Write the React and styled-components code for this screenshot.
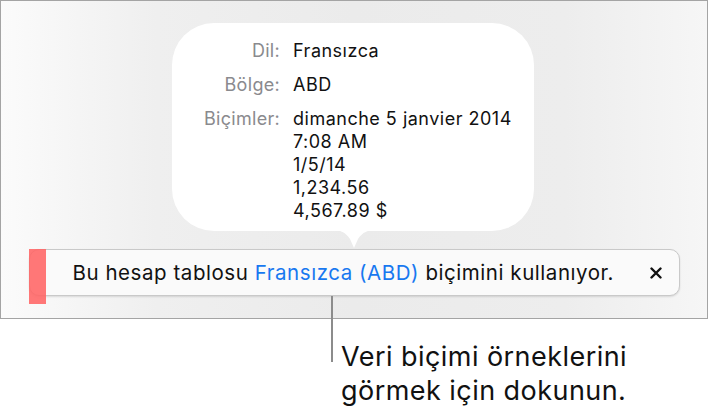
import React from 'react';
import styled, { createGlobalStyle } from 'styled-components';

const GlobalStyle = createGlobalStyle`
    html, body {
        margin: 0;
        padding: 0;
        background: #ffffff;
    }
    body {
        font-family: Inter, "Noto Sans", "Liberation Sans", sans-serif;
        color: #111111;
    }
`;

const Page = styled.div`
    width: 708px;
    height: 420px;
    position: relative;
    overflow: hidden;
`;

const Screen = styled.div`
    box-sizing: border-box;
    width: 708px;
    height: 319px;
    border: 1px solid #a4a4a4;
    background: linear-gradient(90deg, #fbfbfb 0%, #efefef 22%, #ebebeb 50%, #ededed 80%, #f6f6f6 100%);
    display: flex;
    flex-direction: column;
    align-items: center;
    padding-top: 22px;
`;

const Popover = styled.div`
    position: relative;
    box-sizing: border-box;
    width: 362px;
    height: 208px;
    margin-left: -2px;
    background: #ffffff;
    border-radius: 42px;
    padding: 16px 0 0 0;
    display: grid;
    grid-template-columns: 108px 1fr;
    column-gap: 13px;
    row-gap: 11px;
    align-content: start;

    &::after {
        content: '';
        position: absolute;
        left: 159px;
        bottom: -18px;
        width: 46px;
        height: 19px;
        background: #ffffff;
        clip-path: path('M0 0 C 10 0, 14 2, 19 9 L 23 18 L 27 9 C 32 2, 36 0, 46 0 Z');
    }
`;

const Label = styled.div`
    text-align: right;
    font-size: 18px;
    line-height: 23px;
    letter-spacing: 0.3px;
    color: #8a8a8e;
`;

const Value = styled.div`
    font-size: 18px;
    line-height: 23px;
    letter-spacing: 0.5px;
    color: #111111;
`;

const Banner = styled.div`
    position: relative;
    box-sizing: border-box;
    width: 651px;
    height: 47px;
    margin-top: 18px;
    background: #fafafa;
    border: 1px solid #c9c9c9;
    border-radius: 10px;
    box-shadow: 0 1px 2px rgba(0, 0, 0, 0.12);
    display: flex;
    align-items: center;
    padding: 0 15px 0 43px;
`;

const Marker = styled.div`
    position: absolute;
    left: -1px;
    top: -1px;
    width: 17px;
    height: 55px;
    background: rgba(255, 100, 100, 0.88);
`;

const Message = styled.div`
    flex: 1;
    font-size: 20.5px;
    letter-spacing: 0.55px;
    color: #111111;
    white-space: nowrap;
`;

const Link = styled.span`
    color: #1878f0;
`;

const Close = styled.div`
    width: 16px;
    height: 16px;
    display: flex;
    align-items: center;
    justify-content: center;
`;

const Leader = styled.div`
    position: absolute;
    left: 331px;
    top: 296px;
    width: 2px;
    height: 66px;
    background: #8c8c8c;
`;

const Callout = styled.div`
    margin: 21px 0 0 341px;
    font-size: 27px;
    line-height: 34px;
    letter-spacing: 0.45px;
    color: #111111;
`;

const rows = [
    ['Dil:', ['Fransızca']],
    ['Bölge:', ['ABD']],
    ['Biçimler:', ['dimanche 5 janvier 2014', '7:08 AM', '1/5/14', '1,234.56', '4,567.89 $']],
];

export default function App() {
    return (
        <Page>
            <GlobalStyle />
            <Screen>
                <Popover>
                    {rows.map(([label, values]) => (
                        <React.Fragment key={label}>
                            <Label>{label}</Label>
                            <Value>
                                {values.map((v) => (
                                    <div key={v}>{v}</div>
                                ))}
                            </Value>
                        </React.Fragment>
                    ))}
                </Popover>
                <Banner>
                    <Marker />
                    <Message>
                        Bu hesap tablosu <Link>Fransızca (ABD)</Link> biçimini kullanıyor.
                    </Message>
                    <Close>
                        <svg width="12" height="12" viewBox="0 0 12 12">
                            <path d="M1.5 1.5 L10.5 10.5 M10.5 1.5 L1.5 10.5" stroke="#111" strokeWidth="2.4" strokeLinecap="round" />
                        </svg>
                    </Close>
                </Banner>
            </Screen>
            <Leader />
            <Callout>
                Veri biçimi örneklerini
                <br />
                görmek için dokunun.
            </Callout>
        </Page>
    );
}
